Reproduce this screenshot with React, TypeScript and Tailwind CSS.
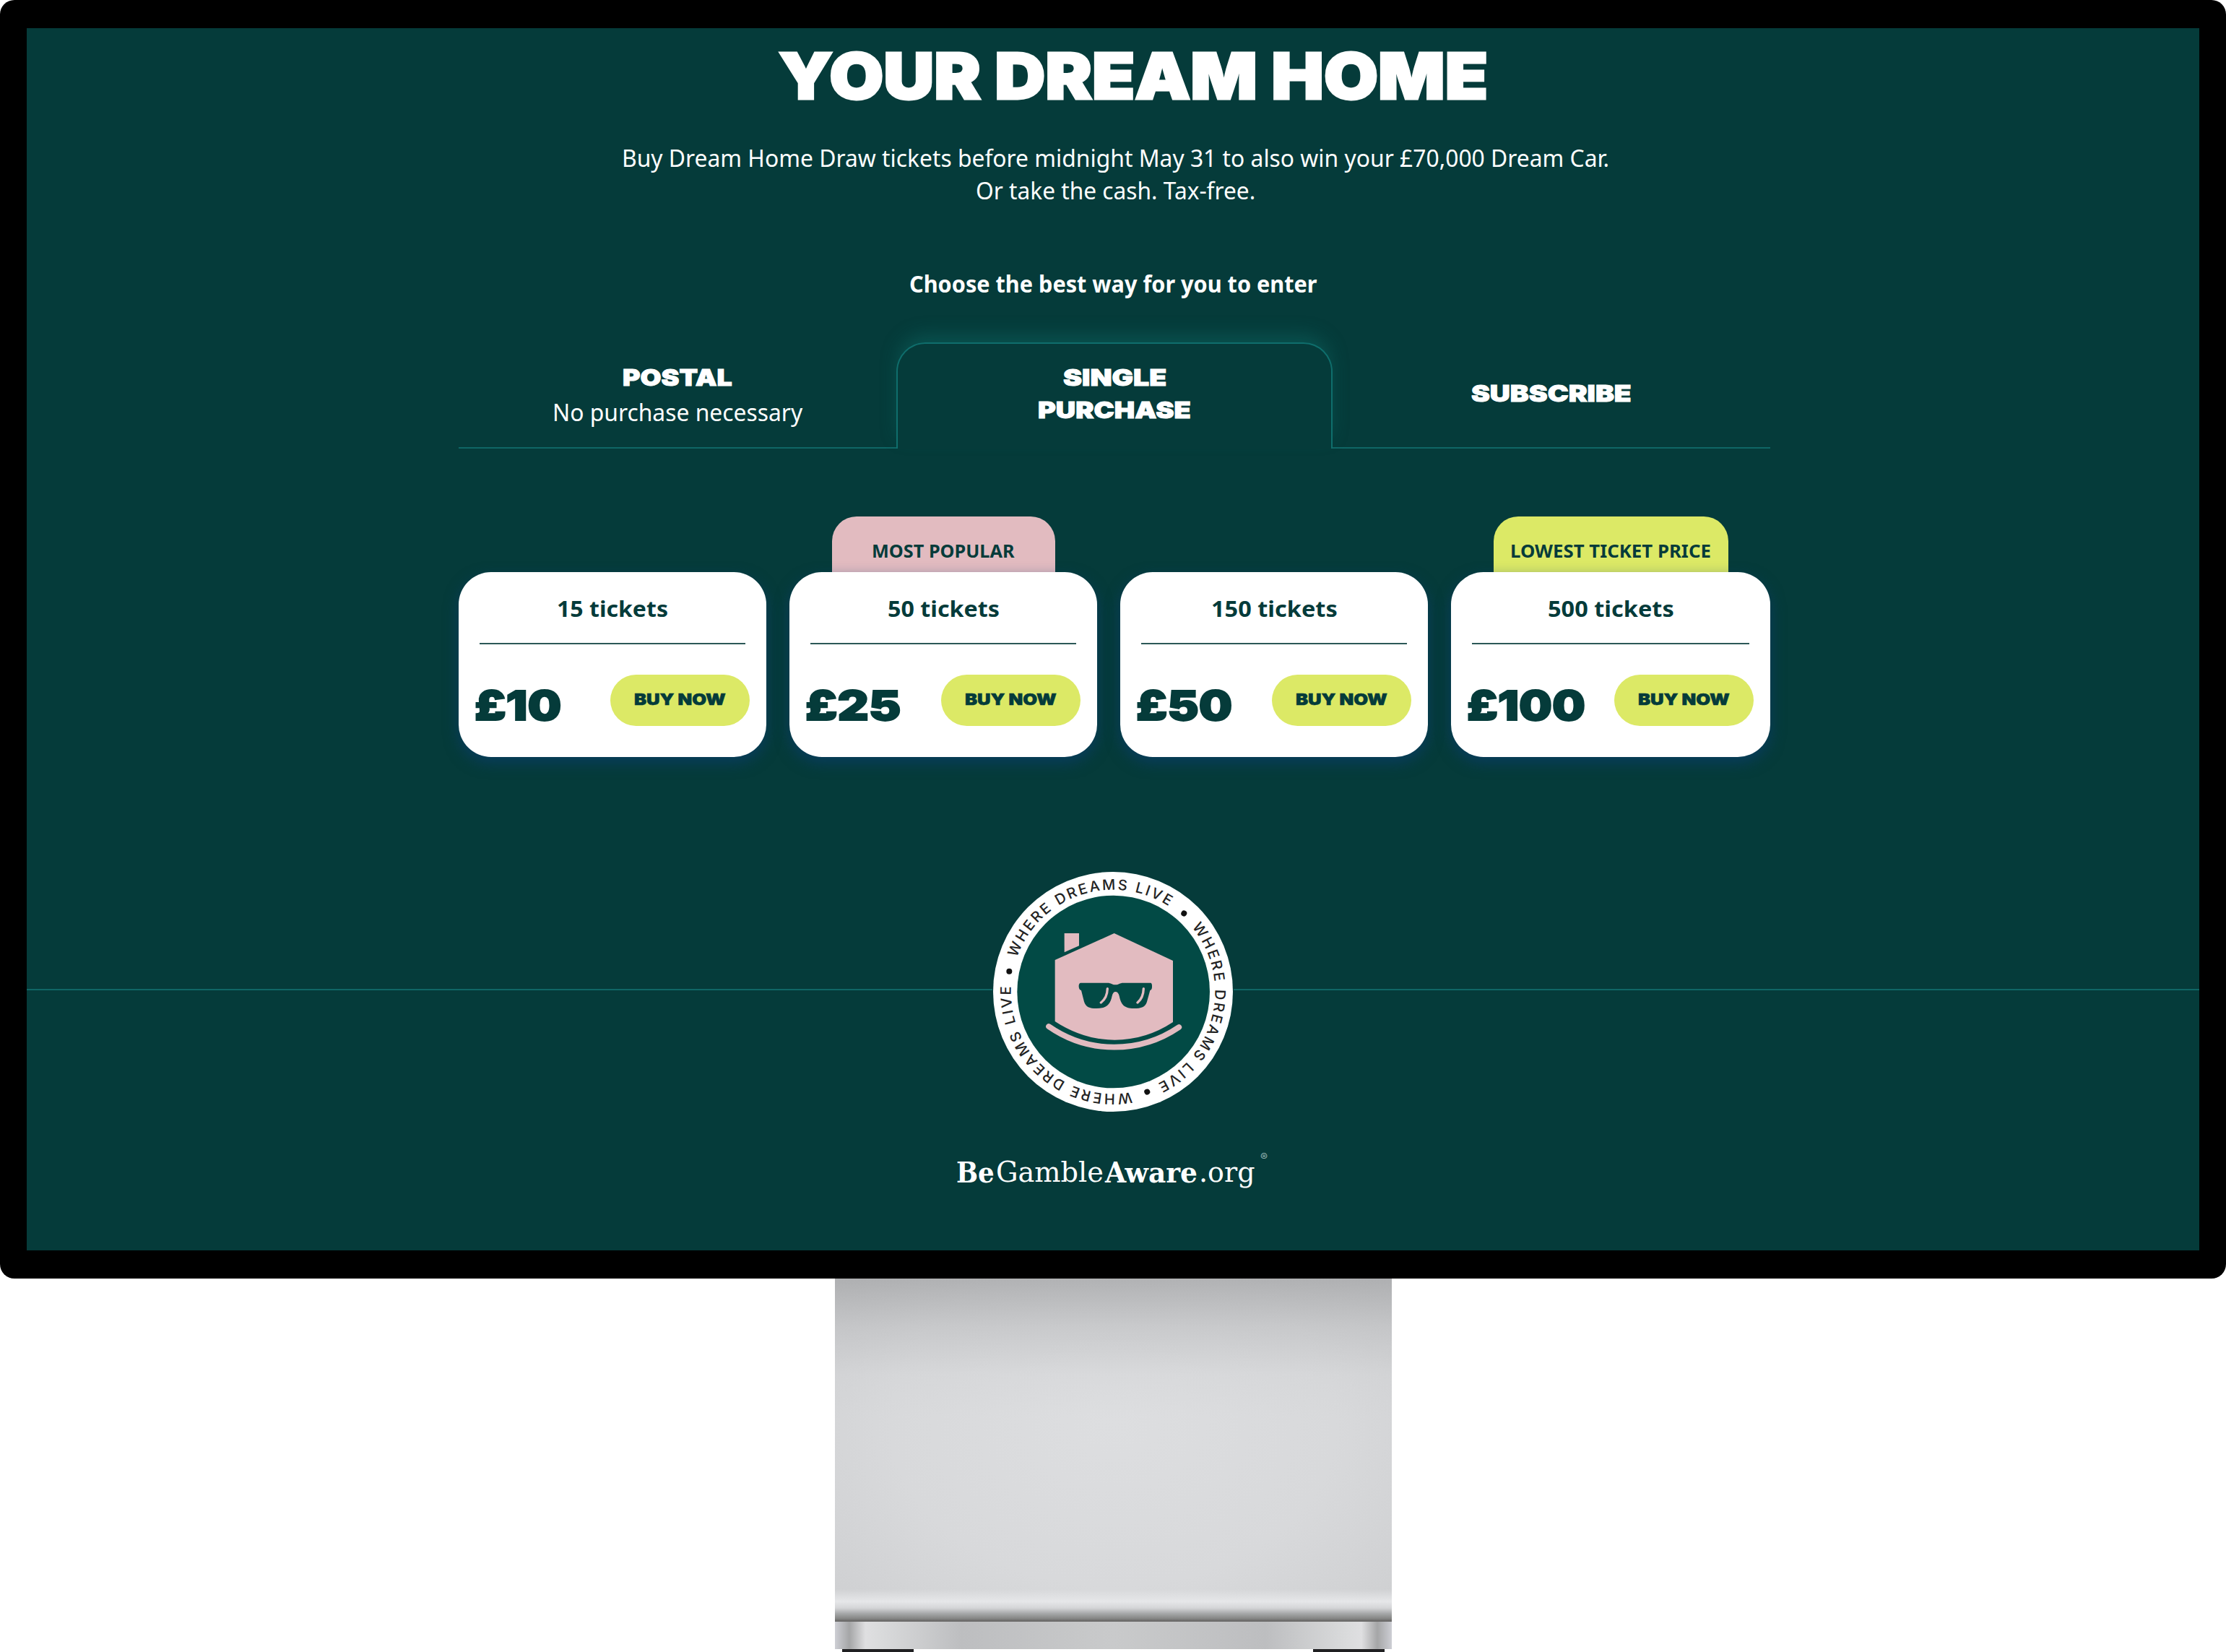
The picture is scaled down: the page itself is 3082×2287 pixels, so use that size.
import { useLayoutEffect, useRef, useState } from "react";
import clsx from "clsx";

const DISPLAY = "font-['Inter',sans-serif] font-black";
const BODY = "font-['Noto_Sans',sans-serif]";
const SLAB = "font-['DejaVu_Serif',serif]";

/* One line of text, stretched or squeezed to fill the given width. */
function Line({ text, width, className }: { text: string; width: number; className?: string }) {
  const ref = useRef<HTMLSpanElement>(null);
  const [scale, setScale] = useState(1);
  useLayoutEffect(() => {
    if (ref.current) setScale(width / ref.current.offsetWidth);
  }, [width, text]);
  return (
    <span className={clsx("block shrink-0", className)} style={{ width }}>
      <span
        ref={ref}
        className="inline-block origin-left whitespace-nowrap align-top"
        style={{ transform: `scaleX(${scale})` }}
      >
        {text}
      </span>
    </span>
  );
}

type Offer = {
  tickets: string;
  ticketsWidth: number;
  price: string;
  priceWidth: number;
  wide?: boolean;
  badge?: { text: string; textWidth: number; className: string };
};

const offers: Offer[] = [
  { tickets: "15 tickets", ticketsWidth: 154, price: "£10", priceWidth: 120 },
  {
    tickets: "50 tickets",
    ticketsWidth: 155,
    price: "£25",
    priceWidth: 133,
    badge: { text: "MOST POPULAR", textWidth: 198, className: "w-[309px] bg-[#e2bbc0]" },
  },
  { tickets: "150 tickets", ticketsWidth: 175, price: "£50", priceWidth: 133 },
  {
    tickets: "500 tickets",
    ticketsWidth: 175,
    price: "£100",
    priceWidth: 164,
    wide: true,
    badge: { text: "LOWEST TICKET PRICE", textWidth: 278, className: "w-[325px] bg-[#dce966]" },
  },
];

function OfferCard({ offer }: { offer: Offer }) {
  return (
    <div className={clsx("flex flex-col items-center text-[#053b3a]", offer.wide ? "w-[442px]" : "w-[426px]")}>
      {offer.badge && (
        <div className={clsx("flex h-[77px] justify-center rounded-t-[34px] pt-[30px]", offer.badge.className)}>
          <Line
            text={offer.badge.text}
            width={offer.badge.textWidth}
            className={clsx(BODY, "text-[24.5px] font-bold leading-[36px]")}
          />
        </div>
      )}
      <div className="flex h-[256px] w-full flex-col rounded-[45px] bg-white pt-[28px] shadow-[0_8px_20px_0_rgba(10,62,112,0.65)]">
        <Line
          text={offer.tickets}
          width={offer.ticketsWidth}
          className={clsx(BODY, "self-center text-[31px] font-bold leading-[44px]")}
        />
        <div className="mx-[29px] mt-[26px] h-[2px] bg-[#2c5857]" />
        <div className="flex items-start justify-between pl-[22px] pr-[23px] pt-[42px]">
          <Line
            text={offer.price}
            width={offer.priceWidth}
            className={clsx(DISPLAY, "mt-[13px] text-[56px] leading-[60px] [-webkit-text-stroke:1.8px_#053b3a]")}
          />
          <button className="flex h-[71px] w-[193px] justify-center rounded-full bg-[#dce966] pt-[18px]">
            <Line
              text="BUY NOW"
              width={127}
              className={clsx(DISPLAY, "text-left text-[22px] leading-[32px] [-webkit-text-stroke:0.6px_#053b3a]")}
            />
          </button>
        </div>
      </div>
    </div>
  );
}

function Badge() {
  return (
    <svg className="h-[334px] w-[334px] shrink-0" viewBox="72 48 1002 1002">
      <circle cx="573" cy="549" r="498" fill="#fff" />
      <circle cx="575" cy="549" r="400" fill="#024a45" />
      <path id="ring" d="M573 973 A424 424 0 0 1 573 125 A424 424 0 0 1 573 973" fill="none" />
      {[0, 121, 240].map((turn) => (
        <g key={turn} transform={`rotate(${turn} 573 549)`}>
          <circle cx="142" cy="464" r="12" fill="#111" />
          <text fill="#222" fontSize="60" fontWeight="500" fontFamily="Inter, sans-serif" textLength="766">
            <textPath href="#ring" startOffset="810" textLength="766">
              WHERE DREAMS LIVE
            </textPath>
          </text>
        </g>
      ))}
      <g fill="#e2bbc0">
        <path d="M371 306H432V358L371 385Z" />
        <path d="M332 417L578 306L822 420V675Q710 749 580 749Q450 749 332 672Z" />
      </g>
      <path d="M306 693Q430 779 578 779Q725 779 847 696" fill="none" stroke="#e2bbc0" strokeWidth="23" strokeLinecap="round" />
      <path
        d="M438 512H550C566 512 568 520 583 520C598 520 600 512 616 512H730Q736 514 735 530Q734 541 727 543L714 590C708 612 690 618 660 618C618 618 606 600 599 566Q595 549 583 549Q573 549 569 566C562 600 548 618 505 618C475 618 460 612 453 590L441 543Q432 541 431 528Q430 514 438 512Z"
        fill="#024a45"
      />
      <path d="M550 536Q549 574 523 594M700 536Q699 574 675 594" fill="none" stroke="#e2bbc0" strokeWidth="10" strokeLinecap="round" />
    </svg>
  );
}

function Tabs() {
  const title = clsx(DISPLAY, "text-[32px] leading-[45px] [-webkit-text-stroke:1px_#fff]");
  return (
    <div className="flex h-[147px] w-[1816px]">
      <div className="flex w-[606px] flex-col items-center border-b-2 border-[#0f6665] pt-[26px]">
        <Line text="POSTAL" width={152} className={title} />
        <Line text="No purchase necessary" width={346} className={clsx(BODY, "mt-[3px] text-[32px] leading-[45px]")} />
      </div>
      <div className="flex w-[604px] flex-col items-center rounded-t-[40px] border-x-2 border-t-2 border-[#0f6e6c] pt-[24px] shadow-[0_-14px_26px_-4px_rgba(17,125,120,0.34)]">
        <Line text="SINGLE" width={143} className={title} />
        <Line text="PURCHASE" width={212} className={title} />
      </div>
      <div className="flex w-[606px] flex-col items-center border-b-2 border-[#0f6665] pt-[48px]">
        <Line text="SUBSCRIBE" width={222} className={title} />
      </div>
    </div>
  );
}

function Screen() {
  return (
    <div className="flex h-[1770px] w-full rounded-[20px] bg-black px-[37px] pb-[39px] pt-[39px]">
      <div className="flex flex-1 flex-col overflow-hidden bg-[#053b3a] pt-[21px] text-white">
        <h1 className="flex justify-center pl-[56px]">
          <Line
            text="YOUR DREAM HOME"
            width={982}
            className={clsx(DISPLAY, "text-[88px] leading-[90px] [-webkit-text-stroke:3px_#fff]")}
          />
        </h1>
        <p className={clsx(BODY, "mt-[46px] flex flex-col items-center pl-[6px] text-[32px] leading-[45px]")}>
          <Line text="Buy Dream Home Draw tickets before midnight May 31 to also win your £70,000 Dream Car." width={1367} />
          <Line text="Or take the cash. Tax-free." width={387} />
        </p>
        <p className={clsx(BODY, "mt-[84px] flex justify-center text-[32px] font-bold leading-[45px]")}>
          <Line text="Choose the best way for you to enter" width={565} />
        </p>
        <div className="flex flex-col items-center pl-[4px] pt-[59px]">
          <Tabs />
          <div className="mt-[94px] flex h-[333px] w-[1816px] items-end justify-between">
            {offers.map((offer) => (
              <OfferCard key={offer.price} offer={offer} />
            ))}
          </div>
        </div>
        <div className="mt-[158px] flex items-center">
          <div className="mb-[6px] h-[2px] flex-1 bg-[#0f6665]" />
          <Badge />
          <div className="mb-[6px] h-[2px] flex-1 bg-[#0f6665]" />
        </div>
        <div className={clsx(SLAB, "mt-[58px] flex justify-center gap-[2px] pr-[3px] text-[39px] leading-[50px]")}>
          <Line text="Be" width={53} className="font-bold" />
          <Line text="Gamble" width={149} />
          <Line text="Aware" width={128} className="font-bold" />
          <Line text=".org" width={78} />
          <span className="-mt-[5px] ml-[5px] font-['Inter',sans-serif] text-[15px] leading-[18px] text-[#8fb0ae]">®</span>
        </div>
      </div>
    </div>
  );
}

function Stand() {
  return (
    <div className="mx-auto flex w-[771px] flex-col">
      <div className="flex h-[475px] flex-col justify-between bg-[radial-gradient(ellipse_80%_95%_at_50%_42%,#dddee0_0%,#d8d9db_50%,#cacbcd_100%)]">
        <div className="h-[190px] bg-[linear-gradient(to_bottom,rgba(156,157,159,0.65),rgba(175,176,178,0.4)_35%,rgba(200,201,203,0.15)_70%,rgba(215,216,218,0))]" />
        <div className="h-[45px] bg-[linear-gradient(to_bottom,rgba(215,216,218,0),#e6e7e9_38%,#d4d5d7_58%,#a6a8a9_75%,#868786_90%,#636261)]" />
      </div>
      <div className="h-[38px] bg-[linear-gradient(to_right,#cdced4_0px,#a5a6a7_20px,#dfdfe1_42px,#dadbdc_62px,#bdbec0_175px,#c9cacb_385px,#bdbec0_596px,#dadbdc_709px,#dfdfe1_729px,#a5a6a7_751px,#cdced4_771px)]" />
      <div className="flex h-[4px] justify-between px-[10px]">
        <div className="w-[99px] bg-[#202022]" />
        <div className="w-[99px] bg-[#202022]" />
      </div>
    </div>
  );
}

export default function App() {
  return (
    <div className="h-[2287px] w-[3082px] overflow-hidden bg-white">
      <Screen />
      <Stand />
    </div>
  );
}
